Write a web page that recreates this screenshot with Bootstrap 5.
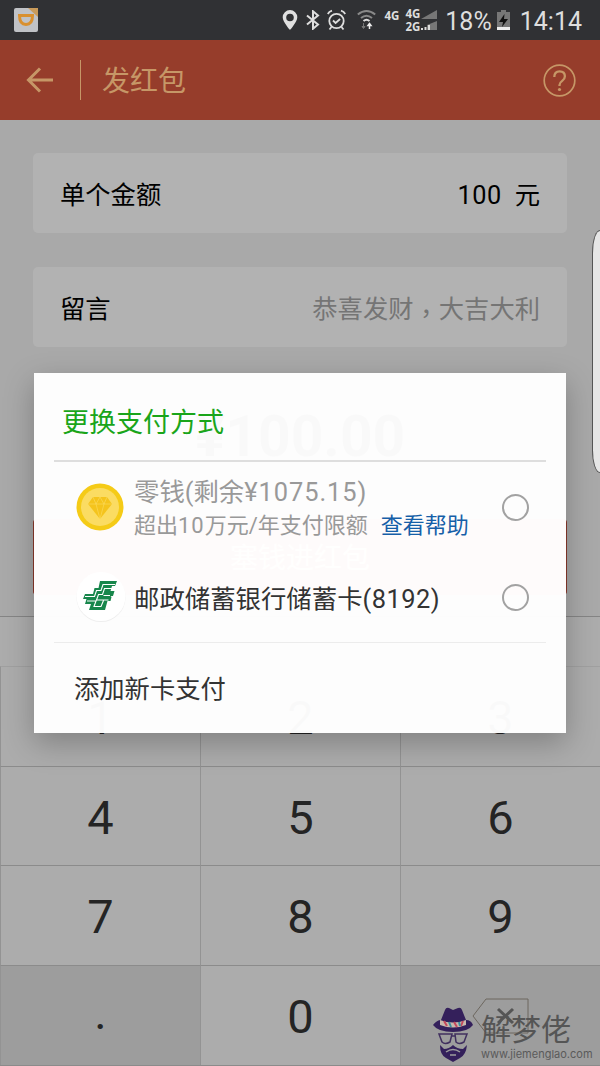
<!DOCTYPE html>
<html lang="zh-CN">
<head>
<meta charset="utf-8">
<meta name="viewport" content="width=device-width, initial-scale=1">
<title>发红包</title>
<link href="https://cdn.jsdelivr.net/npm/bootstrap@5.3.0/dist/css/bootstrap.min.css" rel="stylesheet">
<style>
body{font-family:Roboto,"Noto Sans CJK SC",sans-serif;background:#a9a9a9;color:#000}
.phone{width:600px;height:1066px;background:#a9a9a9}
.statusbar{height:40px;background:#303134;color:#dedede;padding:0 18px 0 14px}
.statusbar svg{display:block;flex:none}
.clock{font-size:25px;line-height:40px;padding-top:2px;height:40px}
.sig{font-size:11.5px;font-weight:700;line-height:13px;font-family:"Open Sans",sans-serif}
.topbar{height:80px;background:#963d2b;color:#c69767;padding:0 24px 0 26px}
.divider{width:1px;height:40px;background:#c69767;margin:0 21px 0 27px}
.topbar h1{font-size:28px;line-height:40px;font-weight:400;padding-top:3px}
.content{height:496px;padding:33px 33px 0}
.field{height:80px;background:#b2b2b2;border-radius:5px;padding:5px 27px 0 27px;font-size:25.3px;line-height:38px;margin-bottom:34px}
.hint{color:#757575}
.hint span{font-family:"Noto Sans CJK TC",sans-serif;display:inline-block;line-height:1;transform:translateY(5px)}
.total{height:138px;padding-top:26px;font-size:57px;line-height:60px;font-weight:700;color:#222}
.send{height:76px;background:#d8604c;border:solid #8a382b;border-width:0 1px;color:#f3e2d4;font-size:28px;border-radius:4px;line-height:79px}
.keypad{height:450px;border-top:1px solid #858585;border-bottom:1px solid #8b8b8b;background:#acacac}
.keybar{height:49px}
.keys{display:grid;grid-template-columns:200px 200px 200px;grid-template-rows:100px 99px 100px 100px}
.key{border-top:1px solid #8b8b8b;border-left:1px solid #939393;font-size:47px;color:#242424;padding-top:4px}
.key:nth-child(-n+3){border-top-color:#a0a0a0}
.key.soft{background:#9d9d9d}
.sheet{left:34px;top:373px;width:532px;height:360px;background:rgba(255,255,255,.976);box-shadow:0 10px 28px rgba(0,0,0,.25);padding:0 20px;color:#333}
.sheet h2{font-size:27px;line-height:40px;height:89px;padding:30px 0 0 8px;color:#1aa51a;border-bottom:2px solid #dedede;font-weight:400}
.method{padding:0 17px 0 22px}
.method.first{height:90px}
.method.second{height:90px}
.method .label1{font-size:25.4px;line-height:34px}
.num{letter-spacing:.95px}
.note{font-size:22px;line-height:33px}
.ring{width:27px;height:27px;border:2px solid #a2a2a2;border-radius:50%}
.addcard{border-top:1px solid #ececec;height:90px;padding:4px 0 0 20px;font-size:25.3px}
.edge{right:0;top:230px;width:8px;height:243px;background:#e6e6e6;border:1px solid #555;border-right:0;border-radius:12px 0 0 12px / 34px 0 0 34px}
.wmark{left:432px;top:1003px;color:#555}
.wname{font-size:30px;line-height:34px;font-weight:400}
.wurl{font-size:11px;line-height:14px;font-family:Inter,sans-serif;color:#5a5a5a}
</style>
</head>
<body>
<div class="phone position-relative overflow-hidden">
  <header class="statusbar d-flex align-items-center">
    <svg width="24" height="24" viewBox="0 0 24 24"><rect width="24" height="24" rx="2" fill="#c0c2c6"/><path d="M14 0h10v9z" fill="#c99b5b"/><path d="M5.500 7.500H18.500C18.500 13.500 16 16.500 12 16.500S5.500 13.500 5.500 7.500z" fill="none" stroke="#d9902f" stroke-width="3"/></svg>
    <svg class="ms-auto" width="16" height="22" viewBox="0 0 16 22"><path fill="#e0e0e0" fill-rule="evenodd" d="M8 1a7.300 7.300 0 0 0-7.300 7.300C.7 13 8 21 8 21s7.300-8 7.300-12.700A7.300 7.300 0 0 0 8 1zm0 3.700a3.800 3.800 0 1 1 0 7.600A3.800 3.800 0 0 1 8 4.700z"/></svg>
    <svg style="margin-left:8px" width="14" height="20" viewBox="0 0 14 20"><path d="M1 5.500l11 9-5 4.200V1.300l5 4.200-11 9" fill="none" stroke="#dedede" stroke-width="2"/></svg>
    <svg style="margin-left:7px" width="19" height="22" viewBox="0 0 19 22"><g fill="none" stroke="#dedede" stroke-width="1.800"><circle cx="9.500" cy="12" r="7.200"/><path d="M.8 5Q2 2.500 5 1.600M18.200 5Q17 2.500 14 1.600M6 11.500l2.600 2.500 4.500-4M4.500 18L2.500 20.500M14.500 18l2 2.500"/></g></svg>
    <svg style="margin-left:11px" width="19" height="22" viewBox="0 0 19 22"><g fill="none" stroke="#898989" stroke-width="2"><path d="M.8 5.500Q9.500-1.500 18.200 5.500"/><path d="M4 9Q9.500 4.500 15 9"/><path d="M6.500 12Q9.500 9.500 12.500 12" stroke="#dedede"/></g><path d="M6.500 14v4M5 17.500h3l-1.500 2z" stroke="#777" fill="#777"/><path d="M12.500 20v-5M11 16.500h3l-1.500-2z" stroke="#eee" fill="#eee" stroke-width="1.500"/></svg>
    <span class="sig" style="margin:-9px 6px 0 9px">4G</span>
    <span class="sig">4G<br>2G</span>
    <svg width="17" height="22" viewBox="0 0 17 22"><path d="M17 1v9H1zM17 12v9H7v-5z" fill="#777"/><path d="M1 19h2v2H1zM4.500 18h2v3h-2zM8 16h2v5H8z" fill="#ddd"/></svg>
    <span class="clock" style="margin-left:8px">18%</span>
    <svg style="margin-left:4px" width="15" height="22" viewBox="0 0 15 22"><path d="M5 1h5v2h4v18H1V3h4z" fill="#777"/><path d="M1 18h13v3H1z" fill="#eee"/><path d="M8.500 5L3 13h4l-1 5 6-8H8z" fill="#111"/></svg>
    <span class="clock" style="margin-left:9px">14:14</span>
  </header>
  <nav class="topbar d-flex align-items-center">
    <svg width="27" height="26" viewBox="0 0 27 26"><path d="M14 1.500L2.500 13 14 24.500M3 13h24" fill="none" stroke="#c69767" stroke-width="3"/></svg>
    <div class="divider"></div>
    <h1 class="m-0">发红包</h1>
    <svg class="ms-auto" width="33" height="33" viewBox="0 0 33 33"><g fill="none" stroke="#c69767"><circle cx="16.500" cy="16.500" r="15.300" stroke-width="1.700"/><path d="M11.300 13q0-5.700 5.300-5.700t5.300 5q0 2.700-2.700 4.600t-2.700 4.200v1" stroke-width="2.300"/></g><circle cx="16.500" cy="25.500" r="1.600" fill="#c69767"/></svg>
  </nav>
  <main class="content">
    <div class="field d-flex align-items-center justify-content-between"><span>单个金额</span><span class="d-flex"><span style="margin-right:13px;letter-spacing:.5px">100</span>元</span></div>
    <div class="field d-flex align-items-center justify-content-between"><span>留言</span><span class="hint">恭喜发财<span lang="zh-TW">，</span>大吉大利</span></div>
    <div class="total text-center">¥100.00</div>
    <div class="send text-center">塞钱进红包</div>
  </main>
  <section class="keypad">
    <div class="keybar"></div>
    <div class="keys">
      <div class="key d-flex align-items-center justify-content-center">1</div>
      <div class="key d-flex align-items-center justify-content-center">2</div>
      <div class="key d-flex align-items-center justify-content-center">3</div>
      <div class="key d-flex align-items-center justify-content-center">4</div>
      <div class="key d-flex align-items-center justify-content-center">5</div>
      <div class="key d-flex align-items-center justify-content-center">6</div>
      <div class="key d-flex align-items-center justify-content-center">7</div>
      <div class="key d-flex align-items-center justify-content-center">8</div>
      <div class="key d-flex align-items-center justify-content-center">9</div>
      <div class="key soft d-flex align-items-center justify-content-center pt-0 pb-1">.</div>
      <div class="key d-flex align-items-center justify-content-center">0</div>
      <div class="key soft d-flex align-items-center justify-content-center pt-0"><svg width="57" height="36" viewBox="0 0 57 36"><path d="M1 18L14 1h42v34H14z" fill="none" stroke="#6d675f"/><path d="M26 11l15 14M41 11L26 25" stroke="#555" stroke-width="3"/></svg></div>
    </div>
  </section>

  <section class="sheet position-absolute">
    <h2 class="m-0">更换支付方式</h2>
    <div class="method first d-flex align-items-center">
      <svg width="48" height="48" viewBox="0 0 48 48"><circle cx="24" cy="24" r="23.500" fill="#f5cb17"/><circle cx="24" cy="24" r="19" fill="#fbdc62"/><path d="M17 14h14l5 7-12 15-12-15z" fill="#f5c41c"/><path d="M12 21h24M17 14l3 7 4 15 4-15 3-7M20 21l4-7 4 7" fill="none" stroke="#fbdc62" stroke-width=".6"/></svg>
      <div style="margin:3px 0 0 10px;color:#999"><div class="label1">零钱(剩余<span class="num">¥1075.15)</span></div><div class="note">超出<span class="num">10</span>万元/年支付限额<span style="margin-left:13px;color:#165fa8">查看帮助</span></div></div>
      <div class="ring ms-auto"></div>
    </div>
    <div class="method second d-flex align-items-center">
      <svg width="50" height="52" viewBox="0 0 50 52"><circle cx="25" cy="26.500" r="24.500" fill="#eee"/><circle cx="25" cy="25.500" r="24.500" fill="#fff"/><path fill="#17864b" d="M24 10h17l-2 5h-3l-1.500 5h4l-1.500 5h-2.500l1 1-1 4h-3l-2.500 9H13l2-6H9l1.500-5H7l2-5h8l1.500-6h4z"/><path d="M39 13.500H27l-2 6h-4.500l-2 6H9M36 17.500h-7.500l-2 6h-4l-2 5.500h12M34 24.500h-6.500M11 30h9l-2 5.500h7l2.500-6" fill="none" stroke="#fff" stroke-width="1.100"/></svg>
      <div class="label1 pt-1" style="margin-left:8px">邮政储蓄银行储蓄卡<span style="letter-spacing:.5px">(8192)</span></div>
      <div class="ring ms-auto"></div>
    </div>
    <div class="addcard d-flex align-items-center">添加新卡支付</div>
  </section>

  <div class="edge position-absolute"></div>
  <div class="wmark position-absolute d-flex">
    <svg width="42" height="60" viewBox="0 0 42 60"><path d="M1 22Q5 17 9 17L13 7q1-3 4-2l4 2 5-2q3-1 4 2l4 10q5 0 7 5-5 7-20 7T1 22z" fill="#34205b"/><path d="M8 17q13 5 26 0v5q-13 5-26 0z" fill="#c9b9ad"/><path d="M12 18l3 5M22 19l3 5M31 18l-2 5" stroke="#c5485c" stroke-width="2"/><path d="M17 19l2 5M27 19l1 4" stroke="#3a90a0" stroke-width="2"/><path d="M7 31h13l-2 8q-5 3-8 0zM23 31h12l-3 8q-5 3-8 0zM20 33h3" fill="none" stroke="#41305f" stroke-width="1.500"/><path d="M8 42l4 4q5 0 9-4 4 4 10 4l4-4q-1 10-7 13l-7 4-7-4q-6-3-6-13z" fill="#34205b"/><path d="M14 49q7-5 14 0M18 52h6" fill="none" stroke="#9d9d9d" stroke-width="1.500"/></svg>
    <div style="margin:10px 0 0 7px"><div class="wname">解梦佬</div><div class="wurl text-nowrap">www.jiemenglao.com</div></div>
  </div>
</div>
<script src="https://cdn.jsdelivr.net/npm/bootstrap@5.3.0/dist/js/bootstrap.bundle.min.js"></script>
</body>
</html>
